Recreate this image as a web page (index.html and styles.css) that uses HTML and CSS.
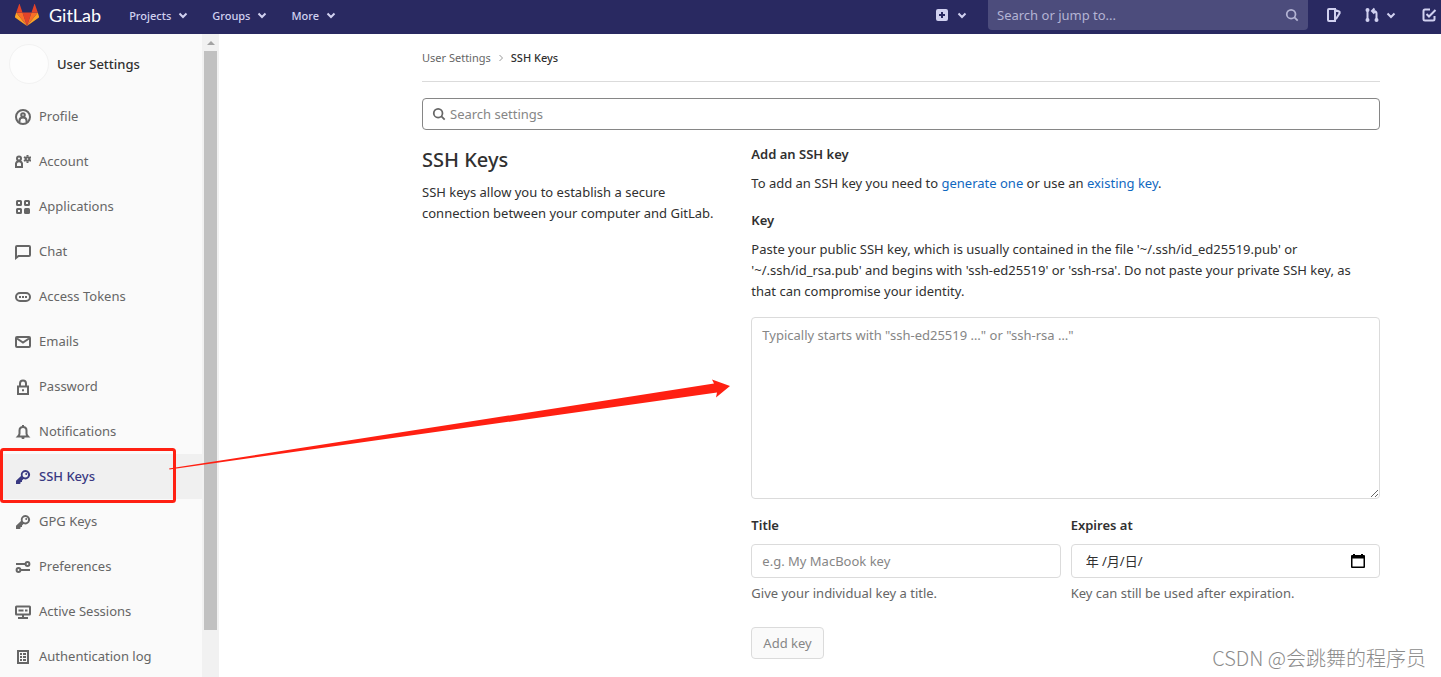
FILE: index.html
```html
<!DOCTYPE html>
<html lang="en">
<head>
<meta charset="utf-8">
<title>SSH Keys · User Settings · GitLab</title>
<link rel="stylesheet" href="styles.css">
</head>
<body>
<svg class="sprite" aria-hidden="true">
  <symbol id="chevron" viewBox="0 0 16 16"><path d="M4.500 6.500L8 10l3.500-3.500"/></symbol>
  <symbol id="search" viewBox="0 0 16 16"><circle cx="7" cy="7" r="5"/><path d="M10.500 10.500l4 4"/></symbol>
  <symbol id="key" viewBox="0 0 16 16"><path class="solid" fill-rule="evenodd" d="M10.300 1a4.700 4.700 0 1 1-1.800 9L7 11.500V13H5.500v1.500L4.700 15H1v-3.200L6 7A4.700 4.700 0 0 1 10.300 1zm0 2a2.700 2.700 0 1 0 0 5.400 2.700 2.700 0 0 0 0-5.400zm.9.900a1 1 0 1 1 0 2 1 1 0 0 1 0-2z"/></symbol>
</svg>

<header class="navbar">
  <a class="brand" href="#">
    <svg class="tanuki" viewBox="0 0 24 22" aria-hidden="true">
      <path fill="#e24329" d="M12 22l4.500-13.500h-9z"/>
      <path fill="#fc6d26" d="M12 22L7.500 8.500H1.200zM12 22l4.500-13.500h6.300z"/>
      <path fill="#fca326" d="M1.200 8.500L0 12.500c-.1.500 0 .9.400 1.200L12 22zM22.800 8.500l1.200 4c.1.500 0 .9-.4 1.200L12 22z"/>
      <path fill="#e24329" d="M1.200 8.500h6.300L4.800.4c-.1-.4-.7-.4-.8 0zM22.800 8.500h-6.300L19.200.4c.1-.4.7-.4.8 0z"/>
    </svg>
    <span>GitLab</span>
  </a>
  <nav class="menus">
    <button type="button">Projects <svg class="icon"><use href="#chevron"/></svg></button>
    <button type="button">Groups <svg class="icon"><use href="#chevron"/></svg></button>
    <button type="button">More <svg class="icon"><use href="#chevron"/></svg></button>
  </nav>
  <button class="new" type="button" aria-label="New">
    <svg class="icon" viewBox="0 0 16 16"><path class="solid" fill-rule="evenodd" d="M4 2h8a2 2 0 0 1 2 2v8a2 2 0 0 1-2 2H4a2 2 0 0 1-2-2V4a2 2 0 0 1 2-2zm3 3v2H5v2h2v2h2V9h2V7H9V5z"/></svg>
    <svg class="icon"><use href="#chevron"/></svg>
  </button>
  <label class="jump">
    <input type="text" placeholder="Search or jump to..." aria-label="Search or jump to">
    <svg class="icon"><use href="#search"/></svg>
  </label>
  <div class="tools">
    <button type="button" aria-label="Issues"><svg class="icon" viewBox="0 0 16 16"><path d="M3 2h6v12H3a1 1 0 0 1-1-1V3a1 1 0 0 1 1-1zM9 3l4 1.500q1 .5.700 1.500L10 12"/></svg></button>
    <button type="button" aria-label="Merge requests">
      <svg class="icon" viewBox="0 0 16 16"><path d="M3.500 3v10M12.500 13V6.500q0-2.500-3-2.500M10.500 1.500L8 4l2.500 2.500"/><circle class="solid" cx="3.500" cy="3" r="2"/><circle class="solid" cx="3.500" cy="13" r="2"/><circle class="solid" cx="12.500" cy="13" r="2"/></svg>
      <svg class="icon"><use href="#chevron"/></svg>
    </button>
    <button type="button" aria-label="To-do list"><svg class="icon" viewBox="0 0 16 16"><path d="M9 2.500H4A1.500 1.500 0 0 0 2.500 4v8A1.500 1.500 0 0 0 4 13.500h8a1.500 1.500 0 0 0 1.500-1.500V9M5.500 7l2.500 2.500L14.500 3"/></svg></button>
  </div>
</header>

<div class="layout">
  <aside class="sidebar">
    <div class="panel">
      <a class="context" href="#"><span class="avatar"></span>User Settings</a>
      <ul>
        <li><a href="#"><svg class="icon" viewBox="0 0 16 16"><circle cx="8" cy="8" r="7"/><circle cx="8" cy="6" r="1.800"/><path d="M4.500 13v-1.500Q4.500 8.500 8 8.500t3.500 3V13"/></svg>Profile</a></li>
        <li><a href="#"><svg class="icon" viewBox="0 0 16 16"><circle cx="4" cy="4.500" r="2"/><path d="M1 13V9.500Q1.500 7.200 4 7.200t3 2.300V13z"/><circle cx="12.500" cy="5" r="1.800"/><path d="M12.500 1v1.500M12.500 7.500V9M9 3l1.500.9M14.500 6.100L16 7M9 7l1.500-.9M14.500 3.900L16 3"/></svg>Account</a></li>
        <li><a href="#"><svg class="icon" viewBox="0 0 16 16"><rect x="2" y="2" width="4" height="4" rx=".5"/><rect x="10" y="2" width="4" height="4" rx=".5"/><rect x="2" y="10" width="4" height="4" rx=".5"/><rect class="solid" x="9" y="9" width="6" height="6" rx="1.500"/></svg>Applications</a></li>
        <li><a href="#"><svg class="icon" viewBox="0 0 16 16"><path d="M1 14V3a1 1 0 0 1 1-1h12a1 1 0 0 1 1 1v8a1 1 0 0 1-1 1H3.500z"/></svg>Chat</a></li>
        <li><a href="#"><svg class="icon" viewBox="0 0 16 16"><rect x="1" y="4" width="14" height="8" rx="4"/><path d="M4 8h2M7 8h2M10 8h2"/></svg>Access Tokens</a></li>
        <li><a href="#"><svg class="icon" viewBox="0 0 16 16"><rect x="1" y="3" width="14" height="10" rx="1"/><path d="M2 4.500l6 4 6-4"/></svg>Emails</a></li>
        <li><a href="#"><svg class="icon" viewBox="0 0 16 16"><path d="M3 7.500h10V15H3zM5 7V4.500a3 3 0 0 1 6 0V7"/><path class="solid" d="M7 10.300h2v2H7z"/></svg>Password</a></li>
        <li><a href="#"><svg class="icon" viewBox="0 0 16 16"><path d="M3 12.500h10q-1.500-1.500-1.500-3V6.500q0-3.500-3.500-3.500T4.500 6.500v3q0 1.500-1.500 3zM8 1v2"/><path class="solid" d="M6.500 13h3v1a1 1 0 0 1-1 1h-1a1 1 0 0 1-1-1z"/></svg>Notifications</a></li>
        <li><a class="active" href="#" aria-current="page"><svg class="icon"><use href="#key"/></svg>SSH Keys</a></li>
        <li><a href="#"><svg class="icon"><use href="#key"/></svg>GPG Keys</a></li>
        <li><a href="#"><svg class="icon" viewBox="0 0 16 16"><path d="M1 5h9M6 11h9"/><circle cx="12.500" cy="5" r="1.900"/><circle cx="3.500" cy="11" r="1.900"/></svg>Preferences</a></li>
        <li><a href="#"><svg class="icon" viewBox="0 0 16 16"><rect x="1" y="2.500" width="14" height="8" rx=".5"/><path d="M3.500 6.500h5M10 6.500h2.500M8 10.500V14M3 14h10"/></svg>Active Sessions</a></li>
        <li><a href="#"><svg class="icon" viewBox="0 0 16 16"><path d="M3 2h10v12H3z"/><path class="solid" d="M5 4h2v2H5zM8 4h3v2H8zM5 7h2v2H5zM8 7h3v2H8zM5 10h2v2H5zM8 10h3v2H8z"/></svg>Authentication log</a></li>
      </ul>
    </div>
    <div class="scrollbar"><span class="up"></span><span class="thumb"></span></div>
  </aside>

  <main class="content">
    <nav class="breadcrumbs" aria-label="Breadcrumbs">
      <a href="#">User Settings</a>
      <svg class="sep" viewBox="0 0 8 8" aria-hidden="true"><path d="M2.500 1l3 3-3 3"/></svg>
      <strong>SSH Keys</strong>
    </nav>
    <label class="filter">
      <svg class="icon"><use href="#search"/></svg>
      <input type="text" placeholder="Search settings" aria-label="Search settings">
    </label>
    <div class="columns">
      <section class="intro">
        <h1>SSH Keys</h1>
        <p>SSH keys allow you to establish a secure connection between your computer and GitLab.</p>
      </section>
      <form class="key-form">
        <h2>Add an SSH key</h2>
        <p>To add an SSH key you need to <a href="#">generate one</a> or use an <a href="#">existing key</a>.</p>
        <label class="name" for="key">Key</label>
        <p class="hint">Paste your public SSH key, which is usually contained in the file '~/.ssh/id_ed25519.pub' or '~/.ssh/id_rsa.pub' and begins with 'ssh-ed25519' or 'ssh-rsa'. Do not paste your private SSH key, as that can compromise your identity.</p>
        <textarea id="key" placeholder="Typically starts with &quot;ssh-ed25519 …&quot; or &quot;ssh-rsa …&quot;"></textarea>
        <div class="pair">
          <div>
            <label class="name" for="title">Title</label>
            <input class="field" id="title" type="text" placeholder="e.g. My MacBook key">
            <p class="help">Give your individual key a title.</p>
          </div>
          <div>
            <label class="name" for="expires">Expires at</label>
            <div class="field date">
              <input id="expires" type="text" value="年 /月/日/">
              <button type="button" aria-label="Open calendar"><svg viewBox="0 0 14 14"><path fill-rule="evenodd" d="M2 0h2v1h6V0h2v1h1a1 1 0 0 1 1 1v11a1 1 0 0 1-1 1H1a1 1 0 0 1-1-1V2a1 1 0 0 1 1-1h1zM1.500 4.500v8h11v-8z"/></svg></button>
            </div>
            <p class="help">Key can still be used after expiration.</p>
          </div>
        </div>
        <button class="submit" type="submit" disabled>Add key</button>
      </form>
    </div>
  </main>
</div>

<svg class="callout" viewBox="0 0 740 677" aria-hidden="true">
  <rect x="1.500" y="449.500" width="173" height="52" rx="2"/>
  <path d="M169 468.500L714 383.500l-2-4 18 6.500-14 11.500 1-5L169.500 469.500z"/>
</svg>
<div class="watermark">CSDN @会跳舞的程序员</div>
</body>
</html>
```
FILE: styles.css
```css
* { box-sizing: border-box; }
body {
  margin: 0;
  position: relative;
  height: 100vh;
  overflow: hidden;
  display: flex;
  flex-direction: column;
  background: #fff;
  color: #303030;
  font: 13px/21px "Noto Sans", "Noto Sans CJK SC", sans-serif;
}
h1, h2, p, ul { margin: 0; padding: 0; }
button, input, textarea { font: inherit; color: inherit; }
button { border: 0; padding: 0; background: none; }
a { color: #1068bf; text-decoration: none; }
::placeholder { color: #868686; opacity: 1; }
.sprite { position: absolute; width: 0; height: 0; }
.icon { width: 16px; height: 16px; flex: none; fill: none; stroke: currentColor; stroke-width: 2; }
.solid { fill: currentColor; stroke: none; }

.navbar {
  flex: none;
  display: flex;
  align-items: center;
  height: 34px;
  padding: 0 4px 4px 15px;
  background: #292961;
  color: #d1d1f0;
}
.brand { display: flex; align-items: center; gap: 10px; color: #fff; font: 18px/24px Lato, sans-serif; }
.tanuki { width: 24px; height: 22px; }
.menus { display: flex; gap: 21px; margin-left: 28px; flex: 1; }
.menus button { display: flex; align-items: center; gap: 4px; font-size: 11px; font-weight: 500; }
.new { display: flex; gap: 4px; margin-right: 18px; }
.jump {
  display: flex;
  align-items: center;
  width: 320px;
  height: 30px;
  padding: 0 9px;
  border-radius: 0 0 4px 4px;
  background: #4c4c7c;
  color: #b4b4d4;
}
.jump input { flex: 1; min-width: 0; padding: 0; border: 0; background: none; }
.jump ::placeholder { color: #b4b4d4; }
.jump .icon { width: 14px; height: 14px; }
.tools { display: flex; gap: 22px; margin-left: 18px; }
.tools button { display: flex; gap: 3px; }

.layout { flex: 1; min-height: 0; display: flex; }
.sidebar { display: flex; width: 219px; flex: none; }
.panel { flex: 1; background: #fafafa; overflow: hidden; }
.context { display: flex; align-items: center; gap: 8px; height: 60px; padding-left: 9px; color: #303030; font-weight: 500; }
.avatar { width: 40px; height: 40px; border: 1px solid #f2f2f2; border-radius: 50%; background: #fdfdfd; }
.panel ul { list-style: none; }
.panel li a { display: flex; align-items: center; gap: 8px; height: 45px; padding-left: 15px; color: #666; }
.panel li .active { background: #f0f0f0; color: #393982; font-weight: 500; }
.scrollbar { width: 17px; padding: 7px 2px 0; background: #f1f1f1; }
.up { display: block; width: 0; margin: 0 auto 6px; border: 4px solid transparent; border-top: 0; border-bottom-color: #a3a3a3; }
.thumb { display: block; height: 91%; background: #c1c1c1; }

.content { flex: 1; min-width: 0; padding: 0 61px 0 203px; }
.breadcrumbs { display: flex; align-items: center; gap: 6px; height: 48px; margin-bottom: 16px; border-bottom: 1px solid #dbdbdb; font-size: 11px; }
.breadcrumbs a { color: #666; }
.breadcrumbs strong { font-weight: 500; }
.sep { width: 8px; height: 8px; fill: none; stroke: #999; }
.filter { display: flex; align-items: center; gap: 4px; height: 32px; padding: 0 9px; border: 1px solid #868686; border-radius: 4px; }
.filter .icon { width: 14px; height: 14px; color: #666; }
.filter input { flex: 1; min-width: 0; padding: 0; border: 0; }
.columns { display: grid; grid-template-columns: 1fr 2fr; gap: 15px; padding-top: 14px; }
.intro { padding: 4px 12px 0 0; }
h1 { margin-bottom: 10px; font-size: 20px; line-height: 24px; font-weight: 500; }
h2 { margin-bottom: 8px; font-size: 13px; line-height: 21px; font-weight: 600; }
.name { display: block; margin: 16px 0 8px; font-weight: 600; }
.hint { padding-right: 12px; }
textarea { display: block; width: 100%; height: 182px; margin-top: 15px; padding: 7px 10px; border: 1px solid #dbdbdb; border-radius: 4px; }
.pair { display: grid; grid-template-columns: 1fr 1fr; gap: 10px; }
.field { display: block; width: 100%; height: 34px; padding: 0 10px; border: 1px solid #dbdbdb; border-radius: 4px; }
.date { display: flex; align-items: center; padding: 0 14px; }
.date input { flex: 1; min-width: 0; padding: 0; border: 0; }
.date svg { display: block; width: 14px; height: 14px; }
.help { margin-top: 5px; color: #666; }
.submit { height: 32px; margin-top: 23px; padding: 0 11px; border: 1px solid #dbdbdb; border-radius: 4px; background: #fafafa; color: #868686; }

.callout { position: absolute; left: 0; top: 0; width: 740px; height: 677px; pointer-events: none; fill: #ff2012; }
.callout rect { fill: none; stroke: #ff2012; stroke-width: 3; }
.watermark { position: absolute; right: 15px; bottom: 6px; color: #8c8c8c; font: 300 20px/26px "Noto Sans CJK SC", sans-serif; }
```
